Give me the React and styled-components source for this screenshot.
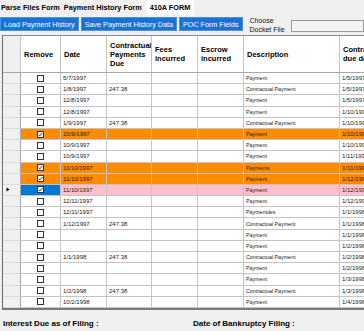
import React from "react";
import styled, { createGlobalStyle } from "styled-components";

const GlobalStyle = createGlobalStyle`
  * {
    margin: 0;
    padding: 0;
    box-sizing: border-box;
  }
  html, body {
    background: #f0f0f0;
    overflow: hidden;
  }
  body {
    font-family: "Liberation Sans", Arial, sans-serif;
    color: #000;
  }
`;

const COLS = "18px 40px 46px 45px 46px 46px 96px 90px";

const Page = styled.div`
  width: 364px;
  height: 331px;
  display: flex;
  flex-direction: column;
  overflow: hidden;
`;

const TabBar = styled.div`
  display: flex;
  height: 15px;
`;

const Tab = styled.div`
  display: flex;
  align-items: center;
  padding: ${(p) => (p.active ? "0 4px 0 4px" : "0 3px 0 1px")};
  margin-left: ${(p) => (p.active ? "1px" : "0")};
  background: ${(p) => (p.active ? "#fff" : "transparent")};
  font-size: 7.3px;
  font-weight: bold;
  white-space: nowrap;
`;

const Toolbar = styled.div`
  display: flex;
  align-items: flex-start;
  height: 20px;
  padding-top: 2px;
  gap: 2px;
`;

const BlueButton = styled.button`
  height: 14px;
  padding: 0 3px;
  border: 1px solid #4a92e0;
  background: #1a72d6;
  color: #fff;
  font-family: inherit;
  font-size: 7.2px;
  white-space: nowrap;
`;

const DocketLabel = styled.div`
  margin-left: 5px;
  font-size: 7px;
  line-height: 8.5px;
  color: #111;
`;

const DocketBox = styled.div`
  flex: 1;
  height: 12px;
  margin-top: 3px;
  margin-left: 4px;
  border: 1px solid #9a9a9a;
  background: #f3f3f3;
`;

const GridFrame = styled.div`
  margin-left: 2px;
  height: 275px;
  border-left: 1px solid #6a6a6a;
  border-top: 1px solid #8a8a8a;
  border-bottom: 2px solid #7a7a7a;
  background: #fff;
  overflow: hidden;
`;

const HeaderRow = styled.div`
  display: grid;
  grid-template-columns: ${COLS};
  height: 37px;
  border-bottom: 1px solid #a8a8a8;
`;

const HeaderCell = styled.div`
  display: flex;
  align-items: center;
  padding-left: 3px;
  border-right: 1px solid #c4c4c4;
  background: ${(p) => (p.corner ? "#f0f0f0" : "#fff")};
  font-size: 7.5px;
  font-weight: bold;
  line-height: 9px;
  white-space: pre;
  overflow: hidden;
`;

const Row = styled.div`
  display: grid;
  grid-template-columns: ${COLS};
  height: 11.2px;
  background: ${(p) =>
    p.tone === "orange" ? "#ff8c00" : p.tone === "pink" ? "#ffc0cb" : "#fff"};
`;

const RowHead = styled.div`
  display: flex;
  align-items: center;
  padding-left: 3px;
  background: #f0f0f0;
  border-right: 1px solid #a8a8a8;
  border-bottom: 1px solid #dcdcdc;
`;

const Cell = styled.div`
  display: flex;
  align-items: center;
  justify-content: ${(p) => (p.center ? "center" : "flex-start")};
  padding-left: ${(p) => (p.center ? "0" : "2px")};
  border-right: 1px solid #c4c4c4;
  border-bottom: 1px solid #c4c4c4;
  background: ${(p) => (p.selected ? "#0078d7" : "transparent")};
  font-size: ${(p) => (p.narrow ? "5.3px" : "6px")};
  color: #1a1a1a;
  white-space: nowrap;
  overflow: hidden;
`;

const Footer = styled.div`
  display: grid;
  grid-template-columns: 190px 1fr;
  padding: 9px 0 0 3px;
`;

const FooterLabel = styled.div`
  font-size: 8px;
  font-weight: bold;
  white-space: nowrap;
`;

const Check = ({ checked }) => (
  <svg width="7" height="7" viewBox="0 0 7 7">
    <rect x="0.5" y="0.5" width="6" height="6" fill="#fff" stroke="#333" />
    {checked && (
      <path d="M1.6 3.6 L2.9 4.9 L5.4 2" fill="none" stroke="#333" strokeWidth="1" />
    )}
  </svg>
);

const Pointer = () => (
  <svg width="4" height="5" viewBox="0 0 4 5">
    <path d="M0.5 0.5 L3.5 2.5 L0.5 4.5 Z" fill="#000" />
  </svg>
);

const rows = [
  { date: "5/7/1997", amt: "", desc: "Payment", due: "1/5/1997" },
  { date: "1/8/1997", amt: "247.38", desc: "Contractual Payment", due: "1/5/1997" },
  { date: "12/8/1997", amt: "", desc: "Payment", due: "1/5/1997" },
  { date: "12/8/1997", amt: "", desc: "Payment", due: "1/10/1997" },
  { date: "1/9/1997", amt: "247.38", desc: "Contractual Payment", due: "1/10/1997" },
  { date: "10/9/1997", amt: "", desc: "Payment", due: "1/10/1997", checked: true, tone: "orange" },
  { date: "10/9/1997", amt: "", desc: "Payment", due: "1/10/1997" },
  { date: "10/9/1997", amt: "", desc: "Payment", due: "1/11/1997" },
  { date: "11/10/1997", amt: "", desc: "Payments", due: "1/11/1997", checked: true, tone: "orange" },
  { date: "11/10/1997", amt: "", desc: "Payment", due: "1/12/1997", checked: true, tone: "orange" },
  { date: "11/10/1997", amt: "", desc: "Payment", due: "1/12/1997", checked: true, tone: "pink", current: true },
  { date: "12/11/1997", amt: "", desc: "Payment", due: "1/12/1997" },
  { date: "12/11/1997", amt: "", desc: "Paymentdes", due: "1/1/1998" },
  { date: "1/12/1997", amt: "247.38", desc: "Contractual Payment", due: "1/1/1998" },
  { date: "", amt: "", desc: "Payment", due: "1/1/1998" },
  { date: "", amt: "", desc: "Payment", due: "1/2/1998" },
  { date: "1/1/1998", amt: "247.38", desc: "Contractual Payment", due: "1/2/1998" },
  { date: "", amt: "", desc: "Payment", due: "1/2/1998" },
  { date: "", amt: "", desc: "Payment", due: "1/3/1998" },
  { date: "1/2/1998", amt: "247.38", desc: "Contractual Payment", due: "1/3/1998" },
  { date: "10/2/1998", amt: "", desc: "Payment", due: "1/4/1998" },
  { date: "1/3/1998", amt: "247.38", desc: "Contractual Payment", due: "1/4/1998" },
];

const headers = [
  "Remove",
  "Date",
  "Contractual\nPayments\nDue",
  "Fees\nincurred",
  "Escrow\nincurred",
  "Description",
  "Contractual\ndue date",
];

const App = () => {
  return (
    <>
      <GlobalStyle />
      <Page>
        <TabBar>
          <Tab>Parse Files Form</Tab>
          <Tab>Payment History Form</Tab>
          <Tab active>410A FORM</Tab>
        </TabBar>
        <Toolbar>
          <BlueButton>Load Payment History</BlueButton>
          <BlueButton>Save Payment History Data</BlueButton>
          <BlueButton>POC Form Fields</BlueButton>
          <DocketLabel>
            Choose
            <br />
            Docket File
          </DocketLabel>
          <DocketBox />
        </Toolbar>
        <GridFrame>
          <HeaderRow>
            <HeaderCell corner />
            {headers.map((h) => (
              <HeaderCell key={h}>{h}</HeaderCell>
            ))}
          </HeaderRow>
          {rows.map((r, i) => (
            <Row key={i} tone={r.tone}>
              <RowHead>{r.current && <Pointer />}</RowHead>
              <Cell center selected={r.current}>
                <Check checked={r.checked} />
              </Cell>
              <Cell>{r.date}</Cell>
              <Cell>{r.amt}</Cell>
              <Cell />
              <Cell />
              <Cell narrow>{r.desc}</Cell>
              <Cell>{r.due}</Cell>
            </Row>
          ))}
        </GridFrame>
        <Footer>
          <FooterLabel>Interest Due as of Filing :</FooterLabel>
          <FooterLabel>Date of Bankruptcy Filing :</FooterLabel>
        </Footer>
      </Page>
    </>
  );
};

export default App;
